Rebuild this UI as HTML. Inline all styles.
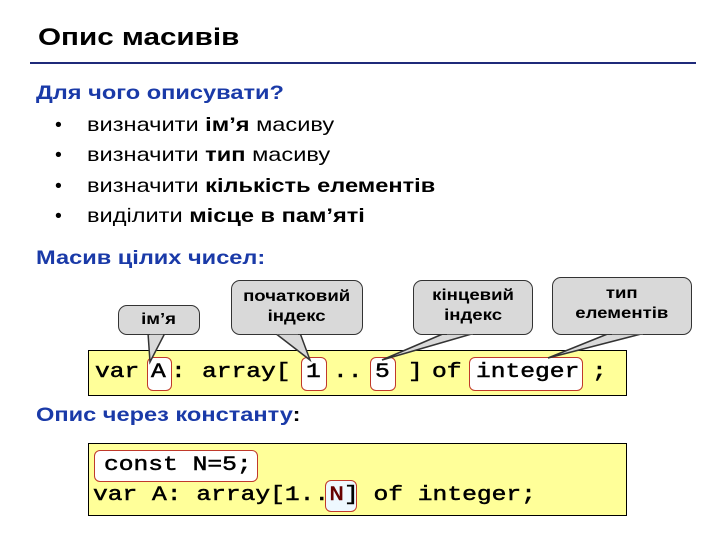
<!DOCTYPE html>
<html><head><meta charset="utf-8"><style>
body{margin:0;width:720px;height:540px;background:#fff;position:relative;overflow:hidden;font-family:"Liberation Sans",sans-serif}
.a{position:absolute;white-space:nowrap;transform:scaleX(1.21);transform-origin:0 0}
.t{font-size:24.5px;font-weight:bold;color:#000}
.h{font-size:19.5px;font-weight:bold;color:#1a3aa8}
.l{font-size:19.5px;color:#000}
.m{font-family:"Liberation Mono",monospace;font-size:20.5px;color:#000;transform:scaleX(1.2);-webkit-text-stroke:0.5px #000}
.p{position:absolute}
.box{position:absolute;background:#ffff99;border:1px solid #000}
.hl{position:absolute;background:#fff;border:1.5px solid #c0392b;border-radius:6px}
.c{position:absolute;background:#d9d9d9;border:1.5px solid #333;border-radius:9px;text-align:center;font-size:15.5px;font-weight:bold;line-height:20px;box-sizing:border-box}
.c span{display:inline-block;transform:scaleX(1.2)}
</style></head><body>
<div class="a t" style="left:38px;top:24px">Опис масивів</div>
<div class="p" style="left:30px;top:62px;width:666px;height:2px;background:#1f2a7a"></div>
<div class="a h" style="left:36px;top:82px">Для чого описувати?</div>
<div class="p l" style="left:55px;top:114px">•</div><div class="a l" style="left:87px;top:114px">визначити <b>ім’я</b> масиву</div>
<div class="p l" style="left:55px;top:144px">•</div><div class="a l" style="left:87px;top:144px">визначити <b>тип</b> масиву</div>
<div class="p l" style="left:55px;top:175px">•</div><div class="a l" style="left:87px;top:175px">визначити <b>кількість елементів</b></div>
<div class="p l" style="left:55px;top:205px">•</div><div class="a l" style="left:87px;top:205px">виділити <b>місце в пам’яті</b></div>
<div class="a h" style="left:36px;top:247px">Масив цілих чисел:</div>

<div class="box" style="left:88px;top:350px;width:537px;height:44px"></div>
<div class="hl" style="left:147px;top:357px;width:23px;height:32px"></div>
<div class="hl" style="left:301px;top:357px;width:24px;height:32px"></div>
<div class="hl" style="left:370px;top:357px;width:24px;height:32px"></div>
<div class="hl" style="left:469px;top:357px;width:112px;height:32px"></div>

<svg class="p" style="left:0;top:0" width="720" height="540">
<g fill="#d9d9d9" stroke="#333" stroke-width="1.5">
<polygon points="148,333 150,362 165,333"/>
<polygon points="275,333 310,360 300,333"/>
<polygon points="445,333 382,360 475,333"/>
<polygon points="610,333 548,358 645,333"/>
</g></svg>
<div class="c" style="left:118px;top:305px;width:82px;height:30px;padding-top:4px"><span>ім’я</span></div>
<div class="c" style="left:231px;top:280px;width:132px;height:55px;padding-top:6px"><span>початковий<br>індекс</span></div>
<div class="c" style="left:413px;top:280px;width:120px;height:55px;padding-top:5px"><span>кінцевий<br>індекс</span></div>
<div class="c" style="left:552px;top:277px;width:140px;height:58px;padding-top:6px"><span>тип<br>елементів</span></div>
<svg class="p" style="left:0;top:0" width="720" height="540"><g stroke="#d9d9d9" stroke-width="2.5">
<line x1="150" y1="333" x2="163" y2="333"/><line x1="277" y1="333" x2="298" y2="333"/>
<line x1="447" y1="333" x2="473" y2="333"/><line x1="612" y1="333" x2="643" y2="333"/></g></svg>

<div class="a m" style="left:95px;top:361px">var</div>
<div class="a m" style="left:151px;top:361px">A</div>
<div class="a m" style="left:171px;top:361px">:</div>
<div class="a m" style="left:202px;top:361px">array[</div>
<div class="a m" style="left:306px;top:361px">1</div>
<div class="a m" style="left:333px;top:361px">..</div>
<div class="a m" style="left:375px;top:361px">5</div>
<div class="a m" style="left:408px;top:361px">]</div>
<div class="a m" style="left:432px;top:361px">of</div>
<div class="a m" style="left:476px;top:361px">integer</div>
<div class="a m" style="left:592px;top:361px">;</div>

<div class="a h" style="left:36px;top:404px">Опис через константу<span style="color:#000">:</span></div>
<div class="box" style="left:88px;top:443px;width:537px;height:71px"></div>
<div class="hl" style="left:94px;top:450px;width:162px;height:30px"></div>
<div class="hl" style="left:325px;top:480px;width:30px;height:30px;background:#eef8ff"></div>
<div class="a m" style="left:104px;top:454px">const N=5;</div>
<div class="a m" style="left:93px;top:484px">var A: array[1..<span style="color:#600;-webkit-text-stroke-color:#600">N</span>] of integer;</div>
</body></html>
